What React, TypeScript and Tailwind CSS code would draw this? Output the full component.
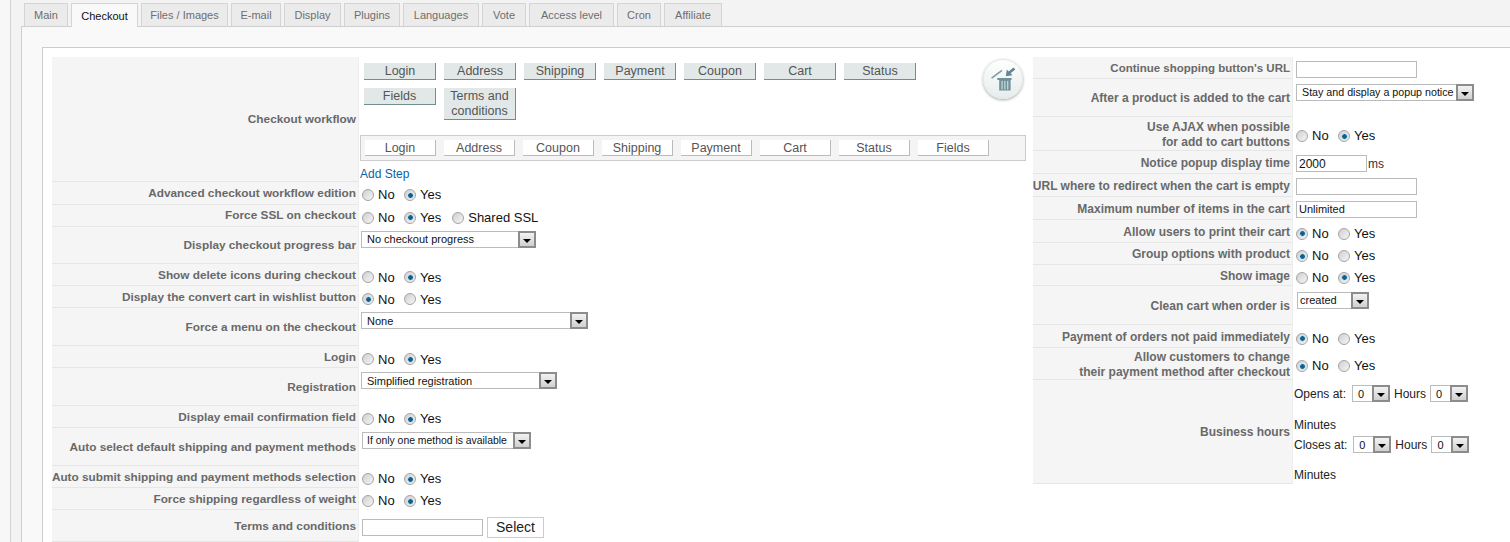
import React from 'react';

// Tab strip
const tabs = [
  { label: 'Main', w: 'w-[44px]' },
  { label: 'Checkout', w: 'w-[67px]', active: true },
  { label: 'Files / Images', w: 'w-[87px]' },
  { label: 'E-mail', w: 'w-[50px]' },
  { label: 'Display', w: 'w-[57px]' },
  { label: 'Plugins', w: 'w-[56px]' },
  { label: 'Languages', w: 'w-[76px]' },
  { label: 'Vote', w: 'w-[44px]' },
  { label: 'Access level', w: 'w-[85px]' },
  { label: 'Cron', w: 'w-[44px]' },
  { label: 'Affiliate', w: 'w-[58px]' },
];

const available = ['Login', 'Address', 'Shipping', 'Payment', 'Coupon', 'Cart', 'Status'];
const chosen = ['Login', 'Address', 'Coupon', 'Shipping', 'Payment', 'Cart', 'Status', 'Fields'];

const Radio: React.FC<{ on?: boolean }> = ({ on }) => (
  <span className="flex h-[12px] w-[12px] shrink-0 items-center justify-center rounded-full border border-[#a4a4a4] bg-gradient-to-br from-[#cfcfcf] to-[#f6f6f6]">
    {on && <span className="h-[7px] w-[7px] rounded-full border border-[#eef3f6] bg-[#0b6392]" />}
  </span>
);

const Radios: React.FC<{ yes?: boolean; no?: boolean; extra?: boolean }> = ({ yes, no, extra }) => (
  <div className="flex items-center pt-[2px] text-[13px] text-[#111]">
    <Radio on={no} />
    <span className="ml-[4px] w-[26px]">No</span>
    <Radio on={yes} />
    <span className="ml-[4px]">Yes</span>
    {extra && (
      <>
        <span className="ml-[11px]"><Radio /></span>
        <span className="ml-[4px]">Shared SSL</span>
      </>
    )}
  </div>
);

const Select: React.FC<{ text: string; w: string; pad?: string; size?: string }> = ({ text, w, pad = 'pl-[5px]', size = 'text-[11px]' }) => (
  <div className={`flex h-[17px] items-center justify-between border-y border-l border-[#bbb] bg-white text-[#111] ${w} ${pad} ${size}`}>
    <span className="whitespace-nowrap">{text}</span>
    <span className="-my-px flex h-[17px] w-[18px] shrink-0 items-center justify-center border-2 border-[#8c8c8c] bg-gradient-to-b from-[#f2f2f2] to-[#d0d0d0]">
      <span className="mt-[3px] h-0 w-0 border-x-[4px] border-t-[4px] border-x-transparent border-t-black" />
    </span>
  </div>
);

const TextInput: React.FC<{ value?: string; w?: string; size?: string }> = ({ value, w = 'w-[121px]', size = 'text-[11px]' }) => (
  <div className={`flex h-[17px] items-center border border-[#bbb] bg-white pl-[2px] text-[#111] ${w} ${size}`}>{value}</div>
);

const Row: React.FC<{
  label: string;
  h: string;
  labelW: string;
  pad?: string;
  topPad?: string;
  children: React.ReactNode;
}> = ({ label, h, labelW, pad = 'pl-[3px]', topPad, children }) => (
  <div className={`flex ${h}`}>
    <div className={`flex shrink-0 items-center justify-end whitespace-pre border-b border-[#e6e6e6] bg-[#f5f5f5] pr-[2px] text-right font-bold leading-[15px] text-[#696969] ${labelW}`}>
      {label}
    </div>
    <div className={`flex min-w-0 flex-1 border-l border-[#eee] ${pad} ${topPad ? `items-start ${topPad}` : 'items-center pt-[2px]'}`}>{children}</div>
  </div>
);

const TrashIcon: React.FC = () => (
  <div className="absolute left-[624px] top-[2px] flex h-[40px] w-[40px] items-center justify-center rounded-full border border-[#e4e8e8] bg-gradient-to-b from-white to-[#e6ecec] shadow-[0_1px_3px_rgba(0,0,0,0.35)]">
    <svg width="40" height="40" viewBox="0 0 40 40">
      <path d="M8 19 L19 11" stroke="#7d9aa0" strokeWidth="1.6" fill="none" />
      <path d="M23 17 L24 10 L26 12 L31 8 L33 10 L28 14 L30 16 Z" fill="#5f8890" />
      <path d="M14 19 H29 V21 H28 V32 H16 V21 H14 Z" fill="#6f9299" />
      <path d="M19 22 V31 M22 22 V31 M25 22 V31" stroke="#e8eeee" strokeWidth="1" />
    </svg>
  </div>
);

const Workflow: React.FC = () => (
  <div className="relative h-full w-full">
    <div className="ml-[5px] flex w-[560px] flex-wrap gap-x-[8px] gap-y-[8px] pt-[6px]">
      {available.map((s) => (
        <div key={s} className="flex h-[17px] w-[72px] items-center justify-center border-b border-r border-[#6f8f90] bg-[#e2e8e8] pl-px pt-px text-[12.5px] text-[#555]">{s}</div>
      ))}
      <div className="flex h-[17px] w-[72px] items-center justify-center border-b border-r border-[#6f8f90] bg-[#e2e8e8] text-[12.5px] text-[#555]">Fields</div>
      <div className="flex h-[32px] w-[72px] items-center justify-center border-b border-r border-[#6f8f90] bg-[#e2e8e8] text-center text-[12.5px] leading-[15px] text-[#555]">Terms and conditions</div>
    </div>
    <div className="ml-[1px] mt-[15px] flex h-[26px] w-[666px] items-center gap-x-[8px] border border-[#ccc] bg-[#f4f4f4] pl-[4px]">
      {chosen.map((s) => (
        <div key={s} className="flex h-[16px] w-[71px] items-center justify-center border-b border-r border-[#bbb] bg-white pt-px text-[12.5px] text-[#555]">{s}</div>
      ))}
    </div>
    <div className="ml-[1px] mt-[6px] text-[12px] leading-[14px] text-[#0b62a4]">Add Step</div>
    <TrashIcon />
  </div>
);

const L = 'w-[306px] pt-[1px] text-[11.8px]';
const R = 'w-[259px] pt-[2px] text-[12px]';

const App: React.FC = () => (
  <div className="h-[542px] w-[1510px] overflow-hidden bg-[#f7f7f7] pl-[10px] font-['Liberation_Sans',Arial,sans-serif]">
    <div className="flex h-full flex-col border-l border-[#d4d4d4] bg-[#f3f3f3]">
      {/* Tabs */}
      <div className="flex h-[26px] shrink-0 items-end gap-x-[3px] pl-[13px]">
        {tabs.map((t) => (
          <div
            key={t.label}
            className={`flex shrink-0 items-center justify-center border border-b-0 border-[#d4d4d4] pt-px text-[11px] ${t.w} ${t.active ? 'relative top-px z-10 h-[24px] bg-[#f9f9f9] text-[#111]' : 'h-[23px] bg-[#ebebeb] text-[#6e6e6e]'}`}
          >
            {t.label}
          </div>
        ))}
      </div>
      {/* Panel */}
      <div className="ml-[10px] min-h-0 flex-1 border-l border-t border-[#cfcfcf] bg-[#f9f9f9] pl-[20px] pt-[20px]">
        <div className="flex h-full gap-x-[7px] border-l border-t border-[#ccc] bg-white pl-[9px] pt-[9px]">
          {/* Left options */}
          <div className="flex w-[974px] shrink-0 flex-col">
            <Row label="Checkout workflow" h="h-[125px]" labelW={L} pad="pl-0" topPad="pt-0"><Workflow /></Row>
            <Row label="Advanced checkout workflow edition" h="h-[23px]" labelW={L}><Radios yes /></Row>
            <Row label="Force SSL on checkout" h="h-[22px]" labelW={L}><Radios yes extra /></Row>
            <Row label="Display checkout progress bar" h="h-[38px]" labelW={L} pad="pl-[2px]" topPad="pt-[4px]"><Select text="No checkout progress" w="w-[175px]" /></Row>
            <Row label="Show delete icons during checkout" h="h-[22px]" labelW={L}><Radios yes /></Row>
            <Row label="Display the convert cart in wishlist button" h="h-[22px]" labelW={L}><Radios no /></Row>
            <Row label="Force a menu on the checkout" h="h-[38px]" labelW={L} pad="pl-[2px]" topPad="pt-[4px]"><Select text="None" w="w-[227px]" /></Row>
            <Row label="Login" h="h-[22px]" labelW={L}><Radios yes /></Row>
            <Row label="Registration" h="h-[38px]" labelW={L} pad="pl-[2px]" topPad="pt-[4px]"><Select text="Simplified registration" w="w-[196px]" /></Row>
            <Row label="Display email confirmation field" h="h-[22px]" labelW={L}><Radios yes /></Row>
            <Row label="Auto select default shipping and payment methods" h="h-[38px]" labelW={L} pad="pl-[3px]" topPad="pt-[4px]"><Select text="If only one method is available" w="w-[169px]" pad="pl-[4px]" size="text-[10.4px]" /></Row>
            <Row label="Auto submit shipping and payment methods selection" h="h-[22px]" labelW={L}><Radios yes /></Row>
            <Row label="Force shipping regardless of weight" h="h-[22px]" labelW={L}><Radios yes /></Row>
            <Row label="Terms and conditions" h="h-[32px]" labelW={L}>
              <TextInput w="w-[121px]" />
              <div className="ml-[4px] flex h-[21px] w-[57px] items-center justify-center border border-[#ccc] bg-white text-[14px] text-[#222]">Select</div>
            </Row>
          </div>
          {/* Right options */}
          <div className="flex min-w-0 flex-1 flex-col">
            <Row label="Continue shopping button's URL" h="h-[22px]" labelW="w-[259px] pt-[2px] text-[11.5px]"><TextInput /></Row>
            <Row label="After a product is added to the cart" h="h-[38px]" labelW={R} topPad="pt-[5px]"><Select text="Stay and display a popup notice" w="w-[178px]" size="text-[10.7px]" /></Row>
            <Row label={'Use AJAX when possible\nfor add to cart buttons'} h="h-[34px]" labelW={R}><Radios yes /></Row>
            <Row label="Notice popup display time" h="h-[23px]" labelW={R}>
              <TextInput value="2000" w="w-[71px]" size="text-[12px]" />
              <span className="ml-[1px] text-[12px] text-[#333]">ms</span>
            </Row>
            <Row label="URL where to redirect when the cart is empty" h="h-[23px]" labelW={R}><TextInput /></Row>
            <Row label="Maximum number of items in the cart" h="h-[23px]" labelW={R}><TextInput value="Unlimited" /></Row>
            <Row label="Allow users to print their cart" h="h-[23px]" labelW={R}><Radios no /></Row>
            <Row label="Group options with product" h="h-[22px]" labelW={R}><Radios no /></Row>
            <Row label="Show image" h="h-[21px]" labelW={R}><Radios yes /></Row>
            <Row label="Clean cart when order is" h="h-[39px]" labelW={R} pad="pl-[4px]" topPad="pt-[6px]"><Select text="created" w="w-[72px]" pad="pl-[2px]" /></Row>
            <Row label="Payment of orders not paid immediately" h="h-[23px]" labelW={R}><Radios no /></Row>
            <Row label={'Allow customers to change\ntheir payment method after checkout'} h="h-[32px]" labelW={R}><Radios no /></Row>
            <Row label="Business hours" h="h-[104px]" labelW={R} pad="pl-[1px]" topPad="pt-[5px]">
              <div className="text-[12px] leading-[14px] text-[#222]">
                <div className="flex h-[17px] items-center">
                  Opens at:<span className="ml-[6px]"><Select text="0" w="w-[38px]" /></span>
                  <span className="mx-[4px]">Hours</span><Select text="0" w="w-[38px]" />
                </div>
                <div className="mt-[16px]">Minutes</div>
                <div className="mt-[4px] flex h-[17px] items-center">
                  Closes at:<span className="ml-[6px]"><Select text="0" w="w-[38px]" /></span>
                  <span className="mx-[4px]">Hours</span><Select text="0" w="w-[38px]" />
                </div>
                <div className="mt-[15px]">Minutes</div>
              </div>
            </Row>
          </div>
        </div>
      </div>
    </div>
  </div>
);

export default App;
